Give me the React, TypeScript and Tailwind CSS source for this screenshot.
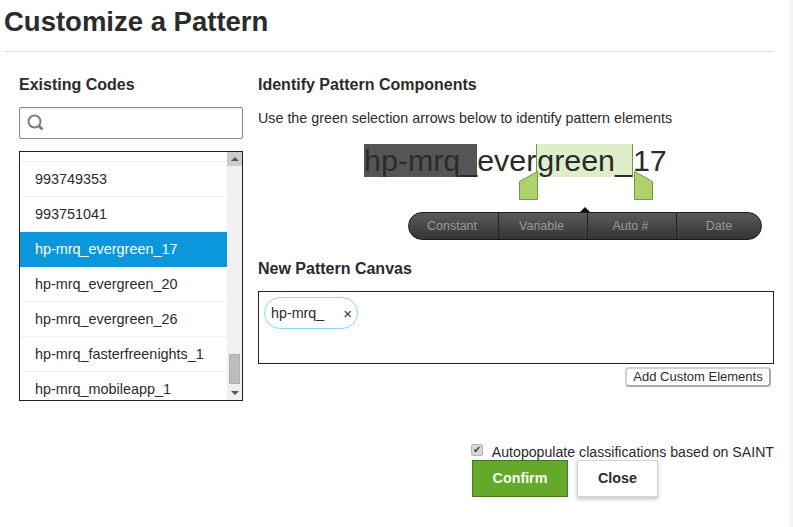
import React from 'react';

const rows = ['993749353', '993751041', 'hp-mrq_evergreen_17', 'hp-mrq_evergreen_20', 'hp-mrq_evergreen_26', 'hp-mrq_fasterfreenights_1', 'hp-mrq_mobileapp_1'];
const tabs = ['Constant', 'Variable', 'Auto #', 'Date'];

const Arrow = ({ flip }: { flip?: boolean }) => (
  <svg width="19" height="29" viewBox="0 0 19 29" className={flip ? 'absolute left-[376px] top-[27px] -scale-x-100' : 'absolute left-[261px] top-[27px]'}>
    <path d="M18.5 0.5V28.5H0.5V10.5L18.5 0.5Z" fill="#aed36a" stroke="#6f9a45" />
  </svg>
);

const App = () => {
  return (
    <div className="flex h-[527px] w-[793px] overflow-hidden bg-white font-['Liberation_Sans',Arial,sans-serif] text-[#2b2b2b]">
      <div className="w-[789px] pl-[4px] pr-[15px]">
        <h1 className="h-[52px] border-b border-[#dddddd] pt-[6px] text-[27.5px] font-bold leading-[32px]">Customize a Pattern</h1>

        <div className="mt-[23px] flex pl-[15px]">
          {/* left column */}
          <div className="w-[224px]">
            <h2 className="text-[16px] font-bold leading-[20px]">Existing Codes</h2>
            <div className="mt-[12px] flex h-[32px] items-center rounded-[2px] border border-[#8a8a8a] pl-[7px] shadow-[inset_0_1px_2px_#e8e8e8]">
              <svg width="18" height="18" viewBox="0 0 18 18" fill="none" stroke="#7d7d7d">
                <circle cx="7.5" cy="7.5" r="6" strokeWidth="2" />
                <path d="M12 12L15.5 15.5" strokeWidth="3" />
              </svg>
            </div>
            <div className="mt-[12px] flex h-[250px] overflow-hidden border border-[#222222]">
              <div className="min-w-0 flex-1">
                <div className="h-[10px] border-b border-[#eeeeee]" />
                {rows.map(row => (
                  <div
                    key={row}
                    className={row === 'hp-mrq_evergreen_17'
                      ? 'flex h-[35px] items-center bg-[#0c97dd] pl-[15px] text-[14.4px] text-white'
                      : 'flex h-[35px] items-center border-b border-[#eeeeee] pl-[15px] pt-[2px] text-[14.4px]'}
                  >
                    {row}
                  </div>
                ))}
              </div>
              <div className="flex w-[15px] flex-col items-center bg-[#f0f0f0]">
                <div className="flex h-[14px] w-full items-center justify-center bg-[#cdcdcd]">
                  <div className="h-0 w-0 border-x-[4px] border-b-[4px] border-x-transparent border-b-[#555555]" />
                </div>
                <div className="mt-[188px] h-[30px] w-[11px] border border-[#b0b0b0] bg-[#bdbdbd]" />
                <div className="mt-[7px] h-0 w-0 border-x-[4px] border-t-[4px] border-x-transparent border-t-[#555555]" />
              </div>
            </div>
          </div>

          {/* right column */}
          <div className="ml-[15px] w-[516px]">
            <h2 className="text-[16px] font-bold leading-[20px]">Identify Pattern Components</h2>
            <p className="mt-[14px] text-[14.3px] leading-[18px]">Use the green selection arrows below to identify pattern elements</p>

            <div className="relative mt-[17px] h-[68px] pl-[106px] text-[30.4px] leading-[33px]">
              <div className="flex">
                <span className="bg-[#555555]">hp-mrq_</span>
                <span>ever</span>
                <span className="border-x border-[#6f9a45] bg-[#dfeeca]">green_</span>
                <span>17</span>
              </div>
              <Arrow />
              <Arrow flip />
            </div>

            <div className="relative ml-[150px] w-[354px]">
              <div className="absolute left-[172px] top-[-5px] h-0 w-0 border-x-[5px] border-b-[5px] border-x-transparent border-b-[#111111]" />
              <div className="flex h-[28px] overflow-hidden rounded-[14px] border border-[#1c1c1c] bg-gradient-to-b from-[#5a5a5a] to-[#353535] text-[12.5px] text-[#9a9a9a]">
                {tabs.map((tab, i) => (
                  <div key={tab} className={i < 3 ? 'flex w-[89px] shrink-0 items-center justify-center border-r border-[#222222] pr-[3px] first:w-[90px]' : 'flex flex-1 items-center justify-center'}>
                    {tab}
                  </div>
                ))}
              </div>
            </div>

            <h2 className="mt-[19px] text-[16px] font-bold leading-[20px]">New Pattern Canvas</h2>
            <div className="mt-[12px] h-[73px] w-[516px] border border-[#222222] p-[5px]">
              <div className="flex h-[32px] w-[94px] items-center justify-between rounded-full border border-[#8fd5f6] pl-[6px] pr-[5px] pt-[1px] text-[14.3px]">
                <span>hp-mrq_</span>
                <span className="text-[15px] leading-none text-[#333333]">×</span>
              </div>
            </div>
            <div className="mt-[3px] flex justify-end pr-[3px]">
              <button className="h-[20px] w-[146px] rounded-[4px] border-2 border-[#d0d0d0] border-b-[#a8a8a8] border-r-[#a8a8a8] bg-white text-[13px] leading-[14px]">Add Custom Elements</button>
            </div>
          </div>
        </div>

        <div className="ml-[467px] mt-[44px] flex h-[15px] items-start">
          <div className="mt-[-1px] flex h-[12px] w-[12px] items-center justify-center rounded-[2px] border border-[#b5b5b5] bg-[#d8d8d8] text-[10px] leading-none text-[#444444]">✔</div>
          <span className="ml-[8px] mt-[-1px] whitespace-nowrap pl-[1px] text-[14.15px] leading-[16px]">Autopopulate classifications based on SAINT</span>
        </div>
        <div className="ml-[468px] flex gap-[9px]">
          <button className="h-[37px] w-[96px] border border-[#447a1e] bg-[#65a92b] text-[14.3px] font-bold text-[#f8fbf0]">Confirm</button>
          <button className="h-[37px] w-[81px] border border-[#d5d5d5] bg-white text-[14.3px] font-bold shadow-[0_2px_4px_rgba(0,0,0,0.25)]">Close</button>
        </div>
      </div>
      <div className="w-[4px] bg-[#f4f4f4]" />
    </div>
  );
};

export default App;
